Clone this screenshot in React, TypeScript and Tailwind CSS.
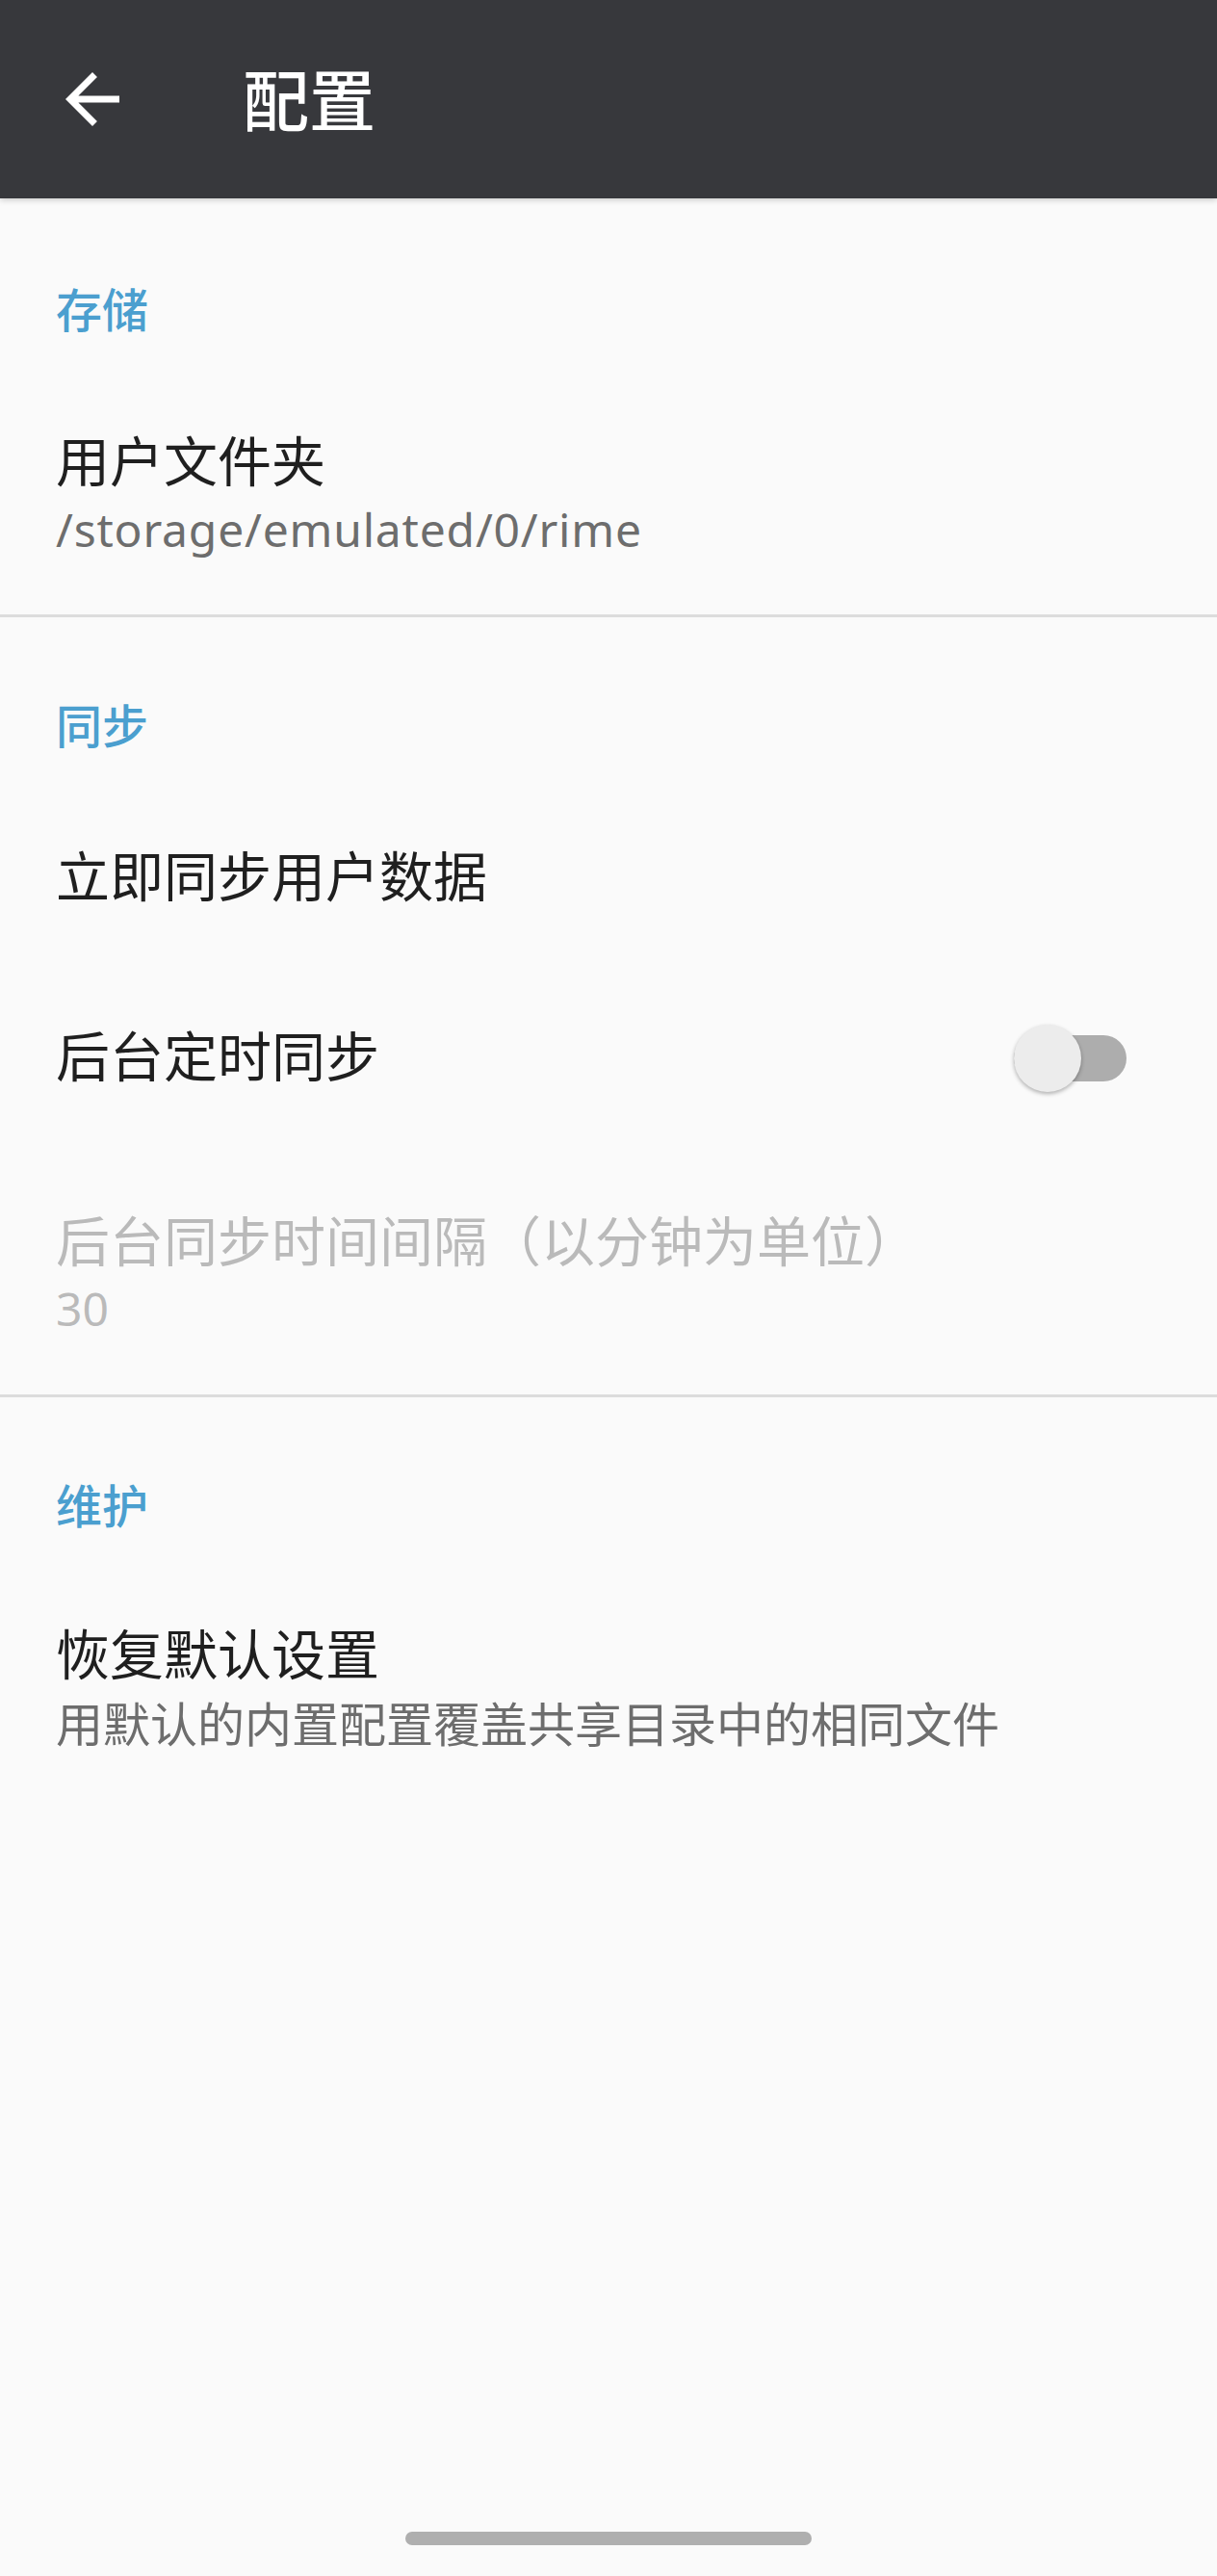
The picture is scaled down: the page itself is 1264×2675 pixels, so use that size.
import React from "react";

const FONT = { fontFamily: 'Roboto, "Noto Sans CJK SC", "Noto Sans", sans-serif' };
const SUM = { fontFamily: '"Noto Sans", "Noto Sans CJK SC", sans-serif' };

function Category({ text, mt }: { text: string; mt: string }) {
  return (
    <div className={`${mt} pl-[58px] text-[48px] leading-[58px] font-medium text-[#4b9fcf]`}>{text}</div>
  );
}

export default function App() {
  return (
    <div className="min-h-[2675px] w-[1264px] bg-[#fafafa] flex flex-col" style={FONT}>
      <div className="relative z-10 h-[206px] bg-[#37383c] flex items-center shadow-[0_2px_6px_rgba(0,0,0,0.18)]">
        <div className="pl-[54px] flex items-center">
          <svg width="84" height="84" viewBox="0 0 24 24" fill="#ffffff">
            <path d="M20 11H7.83l5.59-5.59L12 4l-8 8 8 8 1.41-1.41L7.83 13H20v-2z" />
          </svg>
        </div>
        <div className="ml-[114px] mt-[9px] text-[69px] leading-[80px] font-medium text-white">配置</div>
      </div>

      <Category text="存储" mt="mt-[89px]" />
      <div className="mt-[95px] pl-[58px]">
        <div className="text-[56px] leading-[66px] text-[#1f1f1f]">用户文件夹</div>
        <div className="mt-[7px] text-[48px] leading-[58px] tracking-[0.8px] text-[#6d6d6d]" style={SUM}>/storage/emulated/0/rime</div>
      </div>
      <div className="mt-[59px] h-[3px] bg-[#dcdcdc]" />

      <Category text="同步" mt="mt-[86px]" />
      <div className="mt-[94px] pl-[58px] text-[56px] leading-[66px] text-[#1f1f1f]">立即同步用户数据</div>
      <div className="mt-[119px] pl-[58px] pr-[94px] flex items-center justify-between">
        <div className="text-[56px] leading-[66px] text-[#1f1f1f]">后台定时同步</div>
        <div className="relative w-[117px] h-[70px] flex items-center">
          <div className="w-[117px] h-[48px] rounded-full bg-[#adadad]" />
          <div className="absolute left-0 top-0 w-[70px] h-[70px] rounded-full bg-[#ececec] shadow-[0_2px_4px_rgba(0,0,0,0.3)]" />
        </div>
      </div>
      <div className="mt-[124px] pl-[58px]">
        <div className="text-[56px] leading-[66px] text-[#bababa]">后台同步时间间隔（以分钟为单位）</div>
        <div className="mt-[6px] text-[48px] leading-[58px] text-[#bababa]" style={SUM}>30</div>
      </div>
      <div className="mt-[60px] h-[3px] bg-[#dcdcdc]" />

      <Category text="维护" mt="mt-[86px]" />
      <div className="mt-[92px] pl-[58px]">
        <div className="text-[56px] leading-[66px] text-[#1f1f1f]">恢复默认设置</div>
        <div className="mt-[8px] text-[49px] leading-[58px] text-[#6d6d6d]" style={SUM}>用默认的内置配置覆盖共享目录中的相同文件</div>
      </div>

      <div className="mt-auto mb-[32px] flex justify-center">
        <div className="w-[422px] h-[14px] rounded-full bg-[#afafaf]" />
      </div>
    </div>
  );
}
